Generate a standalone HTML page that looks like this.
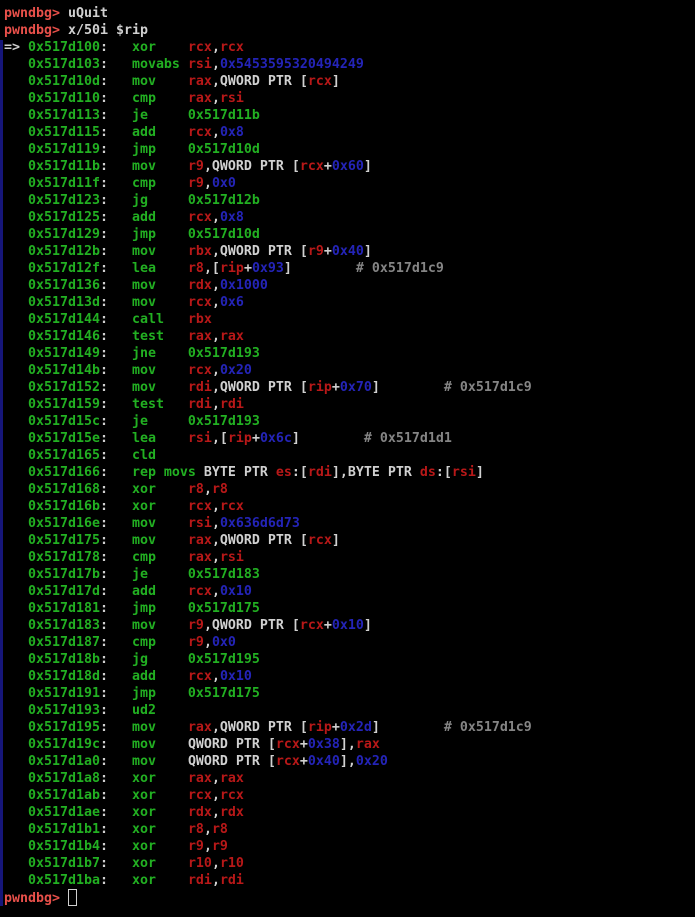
<!DOCTYPE html>
<html><head><meta charset="utf-8"><style>
html,body{margin:0;padding:0;background:#000;width:695px;height:917px;overflow:hidden}
pre{margin:0;padding:5px 0 0 4px;font-family:"DejaVu Sans Mono","Liberation Mono",monospace;font-size:13.29px;line-height:17px;font-weight:bold;color:#d0d0d0;position:relative}
.bar{position:absolute;left:0;top:40px;width:3px;height:866px;background:#16167a}
.p{color:#e8504a}.g{color:#22b022}.r{color:#b81818}.b{color:#2424b8}.c{color:#858585}
.cur{display:inline-block;width:7px;height:15px;border:1px solid #d0d0d0;vertical-align:-4px}
</style></head><body><div class="bar"></div><pre><span class="p">pwndbg&gt;</span> uQuit
<span class="p">pwndbg&gt;</span> x/50i $rip
=&gt; <span class="g">0x517d100</span>:   <span class="g">xor    </span><span class="r">rcx</span>,<span class="r">rcx</span>
   <span class="g">0x517d103</span>:   <span class="g">movabs </span><span class="r">rsi</span>,<span class="b">0x5453595320494249</span>
   <span class="g">0x517d10d</span>:   <span class="g">mov    </span><span class="r">rax</span>,QWORD PTR [<span class="r">rcx</span>]
   <span class="g">0x517d110</span>:   <span class="g">cmp    </span><span class="r">rax</span>,<span class="r">rsi</span>
   <span class="g">0x517d113</span>:   <span class="g">je     0x517d11b</span>
   <span class="g">0x517d115</span>:   <span class="g">add    </span><span class="r">rcx</span>,<span class="b">0x8</span>
   <span class="g">0x517d119</span>:   <span class="g">jmp    0x517d10d</span>
   <span class="g">0x517d11b</span>:   <span class="g">mov    </span><span class="r">r9</span>,QWORD PTR [<span class="r">rcx</span>+<span class="b">0x60</span>]
   <span class="g">0x517d11f</span>:   <span class="g">cmp    </span><span class="r">r9</span>,<span class="b">0x0</span>
   <span class="g">0x517d123</span>:   <span class="g">jg     0x517d12b</span>
   <span class="g">0x517d125</span>:   <span class="g">add    </span><span class="r">rcx</span>,<span class="b">0x8</span>
   <span class="g">0x517d129</span>:   <span class="g">jmp    0x517d10d</span>
   <span class="g">0x517d12b</span>:   <span class="g">mov    </span><span class="r">rbx</span>,QWORD PTR [<span class="r">r9</span>+<span class="b">0x40</span>]
   <span class="g">0x517d12f</span>:   <span class="g">lea    </span><span class="r">r8</span>,[<span class="r">rip</span>+<span class="b">0x93</span>]        <span class="c"># 0x517d1c9</span>
   <span class="g">0x517d136</span>:   <span class="g">mov    </span><span class="r">rdx</span>,<span class="b">0x1000</span>
   <span class="g">0x517d13d</span>:   <span class="g">mov    </span><span class="r">rcx</span>,<span class="b">0x6</span>
   <span class="g">0x517d144</span>:   <span class="g">call   </span><span class="r">rbx</span>
   <span class="g">0x517d146</span>:   <span class="g">test   </span><span class="r">rax</span>,<span class="r">rax</span>
   <span class="g">0x517d149</span>:   <span class="g">jne    0x517d193</span>
   <span class="g">0x517d14b</span>:   <span class="g">mov    </span><span class="r">rcx</span>,<span class="b">0x20</span>
   <span class="g">0x517d152</span>:   <span class="g">mov    </span><span class="r">rdi</span>,QWORD PTR [<span class="r">rip</span>+<span class="b">0x70</span>]        <span class="c"># 0x517d1c9</span>
   <span class="g">0x517d159</span>:   <span class="g">test   </span><span class="r">rdi</span>,<span class="r">rdi</span>
   <span class="g">0x517d15c</span>:   <span class="g">je     0x517d193</span>
   <span class="g">0x517d15e</span>:   <span class="g">lea    </span><span class="r">rsi</span>,[<span class="r">rip</span>+<span class="b">0x6c</span>]        <span class="c"># 0x517d1d1</span>
   <span class="g">0x517d165</span>:   <span class="g">cld</span>
   <span class="g">0x517d166</span>:   <span class="g">rep movs </span>BYTE PTR <span class="r">es</span>:[<span class="r">rdi</span>],BYTE PTR <span class="r">ds</span>:[<span class="r">rsi</span>]
   <span class="g">0x517d168</span>:   <span class="g">xor    </span><span class="r">r8</span>,<span class="r">r8</span>
   <span class="g">0x517d16b</span>:   <span class="g">xor    </span><span class="r">rcx</span>,<span class="r">rcx</span>
   <span class="g">0x517d16e</span>:   <span class="g">mov    </span><span class="r">rsi</span>,<span class="b">0x636d6d73</span>
   <span class="g">0x517d175</span>:   <span class="g">mov    </span><span class="r">rax</span>,QWORD PTR [<span class="r">rcx</span>]
   <span class="g">0x517d178</span>:   <span class="g">cmp    </span><span class="r">rax</span>,<span class="r">rsi</span>
   <span class="g">0x517d17b</span>:   <span class="g">je     0x517d183</span>
   <span class="g">0x517d17d</span>:   <span class="g">add    </span><span class="r">rcx</span>,<span class="b">0x10</span>
   <span class="g">0x517d181</span>:   <span class="g">jmp    0x517d175</span>
   <span class="g">0x517d183</span>:   <span class="g">mov    </span><span class="r">r9</span>,QWORD PTR [<span class="r">rcx</span>+<span class="b">0x10</span>]
   <span class="g">0x517d187</span>:   <span class="g">cmp    </span><span class="r">r9</span>,<span class="b">0x0</span>
   <span class="g">0x517d18b</span>:   <span class="g">jg     0x517d195</span>
   <span class="g">0x517d18d</span>:   <span class="g">add    </span><span class="r">rcx</span>,<span class="b">0x10</span>
   <span class="g">0x517d191</span>:   <span class="g">jmp    0x517d175</span>
   <span class="g">0x517d193</span>:   <span class="g">ud2</span>
   <span class="g">0x517d195</span>:   <span class="g">mov    </span><span class="r">rax</span>,QWORD PTR [<span class="r">rip</span>+<span class="b">0x2d</span>]        <span class="c"># 0x517d1c9</span>
   <span class="g">0x517d19c</span>:   <span class="g">mov    </span>QWORD PTR [<span class="r">rcx</span>+<span class="b">0x38</span>],<span class="r">rax</span>
   <span class="g">0x517d1a0</span>:   <span class="g">mov    </span>QWORD PTR [<span class="r">rcx</span>+<span class="b">0x40</span>],<span class="b">0x20</span>
   <span class="g">0x517d1a8</span>:   <span class="g">xor    </span><span class="r">rax</span>,<span class="r">rax</span>
   <span class="g">0x517d1ab</span>:   <span class="g">xor    </span><span class="r">rcx</span>,<span class="r">rcx</span>
   <span class="g">0x517d1ae</span>:   <span class="g">xor    </span><span class="r">rdx</span>,<span class="r">rdx</span>
   <span class="g">0x517d1b1</span>:   <span class="g">xor    </span><span class="r">r8</span>,<span class="r">r8</span>
   <span class="g">0x517d1b4</span>:   <span class="g">xor    </span><span class="r">r9</span>,<span class="r">r9</span>
   <span class="g">0x517d1b7</span>:   <span class="g">xor    </span><span class="r">r10</span>,<span class="r">r10</span>
   <span class="g">0x517d1ba</span>:   <span class="g">xor    </span><span class="r">rdi</span>,<span class="r">rdi</span>
<span class="p">pwndbg&gt;</span> <span class="cur"></span></pre></body></html>
